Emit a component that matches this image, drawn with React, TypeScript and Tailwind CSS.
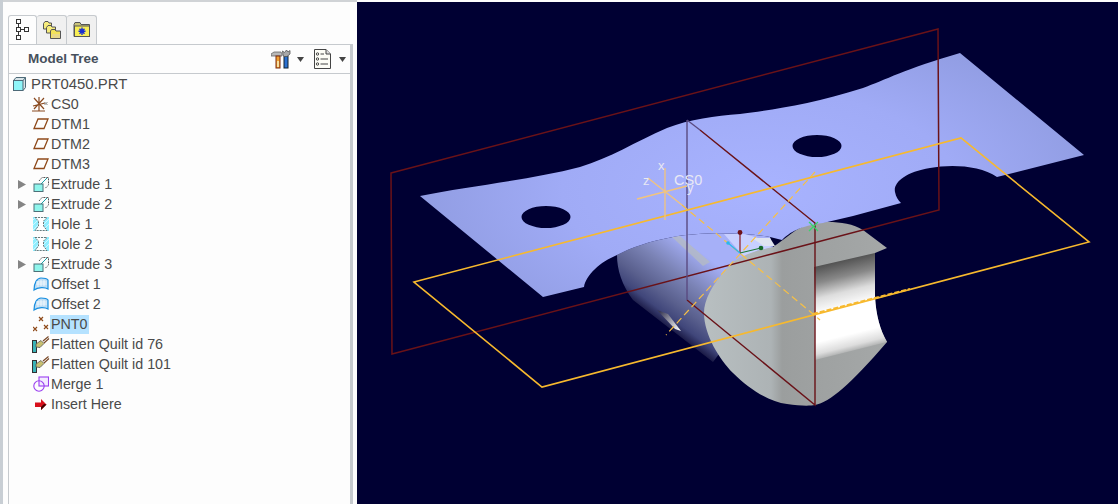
const TreeTabIcon = () => (
  <svg width="20" height="24" viewBox="0 0 20 24" fill="none" stroke="#333" strokeWidth="1">
    <rect x="3.5" y="1.5" width="4" height="4" />
    <rect x="3.5" y="9.5" width="4" height="4" />
    <rect x="3.5" y="17.5" width="4" height="4" />
    <rect x="11.5" y="9.5" width="4" height="4" />
    <path d="M5.5 5.5V9.5M5.5 13.5V17.5M7.5 11.5H11.5" />
  </svg>
);

const FoldersIcon = () => (
  <svg width="20" height="20" viewBox="0 0 20 20" stroke="#555" strokeWidth="1">
    <path d="M1.5 3.5L3 1.5H6L7 3H9.5V9H1.5Z" fill="#f6ec7c" />
    <path d="M4.5 7.5L6 5.5H9L10 7H13.5V13H4.5Z" fill="#f6ec7c" />
    <path d="M8.5 11L9.5 9.5H13L14 11H18.5V18.5H8.5Z" fill="#f3e35a" />
    <path d="M10 14H18V18H10Z" fill="#e9d98a" stroke="none" />
  </svg>
);

const FolderStarIcon = () => (
  <svg width="18" height="16" viewBox="0 0 18 16" stroke="#555" strokeWidth="1">
    <path d="M1 2.5L2 .5H7L8 2.5H16.5V14.5H1Z" fill="#c9c27a" />
    <rect x="1.5" y="4" width="15" height="10.5" fill="#f8ee55" />
    <path d="M9 5.5V13M5.5 9.2H12.5M6.5 6.7L11.5 11.7M11.5 6.7L6.5 11.7" stroke="#1a2fd0" strokeWidth="1.4" />
    <circle cx="9" cy="9.2" r="1.4" fill="#1a2fd0" stroke="none" />
  </svg>
);

const ToolsIcon = () => (
  <svg width="20" height="20" viewBox="0 0 20 20">
    <path d="M0 5L3 3H10L11 5V7H2L0 7Z" fill="#b8b8b8" stroke="#666" strokeWidth=".8" />
    <rect x="5" y="7" width="4" height="12" fill="#f0a030" stroke="#7a2a10" strokeWidth="1" />
    <rect x="6" y="12" width="2" height="6" fill="#f8e0a0" />
    <rect x="13" y="7" width="4" height="12" fill="#2a70d0" stroke="#123" strokeWidth="1" />
    <path d="M12 6L11.5 2L13.5 3.5L15.5 1L17 3L19 1.5L19 5L16 7.5H13Z" fill="#a8a8a8" stroke="#555" strokeWidth=".8" />
  </svg>
);

const ListIcon = () => (
  <svg width="17" height="20" viewBox="0 0 17 20" fill="#fdfdf6" stroke="#444" strokeWidth="1">
    <path d="M.5 .5H12L16.5 5V19.5H.5Z" />
    <path d="M12 .5V5H16.5" fill="#ddd" />
    <circle cx="3.5" cy="5" r="1.2" />
    <circle cx="3.5" cy="10" r="1.2" />
    <circle cx="3.5" cy="15" r="1.2" />
    <path d="M6.5 5H10M6.5 10H14M6.5 15H14" />
  </svg>
);

const Caret = () => (
  <svg width="7" height="5" viewBox="0 0 7 5"><path d="M0 0H7L3.500 5Z" fill="#444" /></svg>
);

const PartIcon = () => (
  <svg width="13" height="14" viewBox="0 0 13 14" stroke="#4d6a78" strokeWidth="1">
    <path d="M.5 3.5L3 .5H12.5V10.5L10 13.500H.5Z" fill="#d8e4e8" />
    <rect x=".5" y="3.5" width="9.5" height="10" fill="#8ff5f8" />
    <path d="M10 3.5L12.5 .5" />
  </svg>
);

const CsysIcon = () => (
  <svg width="17" height="16" viewBox="0 0 17 16" stroke="#8a4a20" strokeWidth="1.2" fill="none">
    <path d="M7 1V15M1 10L13 7M2 2L12 13M0 15H13M12 2L2 13" />
    <path d="M12.500 6L15.500 9M15.500 6L12.500 9" stroke="#888" strokeWidth="1" />
  </svg>
);

const DatumIcon = () => (
  <svg width="16" height="12" viewBox="0 0 16 12" fill="none">
    <path d="M5 1H15L11 10.500H1Z" stroke="#8f4a1a" strokeWidth="1.3" />
  </svg>
);

const ExtrudeIcon = () => (
  <svg width="16" height="16" viewBox="0 0 16 16" fill="none">
    <path d="M6 5L9 1.5H15.5V9L12 12.5" stroke="#555" strokeWidth="1" strokeDasharray="2 1" />
    <path d="M7 9L14 2" stroke="#18a0a8" strokeWidth="1" />
    <rect x="1" y="8" width="9" height="7.5" fill="#8ff5ec" stroke="#4d7078" strokeWidth="1" />
  </svg>
);

const HoleIcon = () => (
  <svg width="16" height="14" viewBox="0 0 16 14">
    <rect width="16" height="14" fill="#8feeff" />
    <path d="M0 3L3 0M0 8L8 0M0 13L13 0M4 14L16 2M9 14L16 7" stroke="#d0f7ff" strokeWidth="1" />
    <path d="M2 .5H14L10.500 4V9L14 13.500H2L5.500 9V4Z" fill="#fff" stroke="#555" strokeWidth=".8" strokeDasharray="2 1" />
  </svg>
);

const OffsetIcon = () => (
  <svg width="16" height="15" viewBox="0 0 16 15">
    <path d="M1 13C1 6 4 1 8 1C11 1 14 1.5 15 3V12C12 10 5 10 1 13Z" fill="#bcdcf4" stroke="#1a8fe0" strokeWidth="1.2" />
    <path d="M5 4V10M8 3V9M11 3V9M3 7H14M3 5H14" stroke="#fff" strokeWidth=".7" />
  </svg>
);

const PointIcon = () => (
  <svg width="16" height="16" viewBox="0 0 16 16" stroke="#8f4a1a" strokeWidth="1.2">
    <path d="M6 1L10 5M10 1L6 5M0 11L4 15M4 11L0 15M11 9L15 13M15 9L11 13" />
  </svg>
);

const FlattenIcon = () => (
  <svg width="18" height="17" viewBox="0 0 18 17">
    <rect x=".5" y="4.5" width="4" height="12" fill="#3ab4b8" stroke="#333" strokeWidth="1" />
    <path d="M4 8L9 4.5L12 7.5L8 11.5L4 11Z" fill="#c8c070" stroke="#555" strokeWidth=".8" />
    <path d="M11 5L16.5 .5M12 7L17 2.5" stroke="#7a4a2a" strokeWidth="1.2" />
  </svg>
);

const MergeIcon = () => (
  <svg width="16" height="16" viewBox="0 0 16 16" fill="none" stroke="#9a3ff0" strokeWidth="1.1">
    <rect x="6" y="1" width="9.5" height="9" fill="#f4ecff" />
    <circle cx="6" cy="10" r="5.2" />
  </svg>
);

const InsertIcon = () => (
  <svg width="12" height="11" viewBox="0 0 12 11">
    <path d="M0 3.5H6V0L11.5 5.5L6 11V8H0Z" fill="#d8101c" />
    <path d="M6 11L11.5 5.5L9 5L6 8Z" fill="#400" />
  </svg>
);

type Row = { label: string; icon: React.ReactNode; arrow?: boolean; selected?: boolean };

const rows: Row[] = [
  { label: 'CS0', icon: <CsysIcon /> },
  { label: 'DTM1', icon: <DatumIcon /> },
  { label: 'DTM2', icon: <DatumIcon /> },
  { label: 'DTM3', icon: <DatumIcon /> },
  { label: 'Extrude 1', icon: <ExtrudeIcon />, arrow: true },
  { label: 'Extrude 2', icon: <ExtrudeIcon />, arrow: true },
  { label: 'Hole 1', icon: <HoleIcon /> },
  { label: 'Hole 2', icon: <HoleIcon /> },
  { label: 'Extrude 3', icon: <ExtrudeIcon />, arrow: true },
  { label: 'Offset 1', icon: <OffsetIcon /> },
  { label: 'Offset 2', icon: <OffsetIcon /> },
  { label: 'PNT0', icon: <PointIcon />, selected: true },
  { label: 'Flatten Quilt id 76', icon: <FlattenIcon /> },
  { label: 'Flatten Quilt id 101', icon: <FlattenIcon /> },
  { label: 'Merge 1', icon: <MergeIcon /> },
  { label: 'Insert Here', icon: <InsertIcon /> },
];

const TreeRow = ({ row }: { row: Row }) => (
  <div className="flex h-5 items-center">
    <div className="flex w-[22px] justify-end pr-[5px]">
      {row.arrow && (
        <svg width="8" height="9" viewBox="0 0 8 9"><path d="M0 0L8 4.5L0 9Z" fill="#858585" /></svg>
      )}
    </div>
    <div className="flex w-[19px] items-center justify-center">{row.icon}</div>
    <span className={row.selected ? 'bg-[#b5e2ff] px-px leading-[19px]' : 'px-px leading-[19px]'}>{row.label}</span>
  </div>
);

const Scene = () => (
  <svg className="block h-full w-full" viewBox="357 2 761 502" fill="none">
    <defs>
      <radialGradient id="plate" gradientUnits="userSpaceOnUse" cx="760" cy="190" r="360" gradientTransform="matrix(1 0 0 .5 0 95)">
        <stop offset="0" stopColor="#a8b3ff" />
        <stop offset="0.55" stopColor="#a0abf6" />
        <stop offset="1" stopColor="#8f9be0" />
      </radialGradient>
      <linearGradient id="body" gradientUnits="userSpaceOnUse" x1="634" y1="302" x2="682" y2="238">
        <stop offset="0" stopColor="#1c1c48" />
        <stop offset="0.12" stopColor="#40467a" />
        <stop offset="0.3" stopColor="#5a608e" />
        <stop offset="0.6" stopColor="#7a82b4" />
        <stop offset="1" stopColor="#a6b0f8" />
      </linearGradient>
      <linearGradient id="disc" gradientUnits="userSpaceOnUse" x1="704" y1="0" x2="890" y2="0">
        <stop offset="0" stopColor="#b8bfc1" />
        <stop offset="0.36" stopColor="#adb3b5" />
        <stop offset="0.42" stopColor="#9b9e9e" />
        <stop offset="1" stopColor="#a5a8a8" />
      </linearGradient>
      <linearGradient id="notch" gradientUnits="userSpaceOnUse" x1="830" y1="262" x2="853" y2="355">
        <stop offset="0" stopColor="#4e4e4e" />
        <stop offset="0.18" stopColor="#888888" />
        <stop offset="0.34" stopColor="#dddddd" />
        <stop offset="0.5" stopColor="#ffffff" />
        <stop offset="0.78" stopColor="#ffffff" />
        <stop offset="0.9" stopColor="#dddddd" />
        <stop offset="1" stopColor="#909393" />
      </linearGradient>
      <linearGradient id="glint" gradientUnits="userSpaceOnUse" x1="660" y1="312" x2="680" y2="330">
        <stop offset="0" stopColor="#3a3a55" />
        <stop offset="1" stopColor="#ffffff" />
      </linearGradient>
    </defs>

    {/* cylinder behind the plate */}
    <path d="M617 255C617 270 622 285 633 300L713 362L760 300L773 247L770 237C740 232 700 232 673 237C650 241 630 248 617 255Z" fill="url(#body)" />
    <path d="M657 310L668 314L681 331L675 329Z" fill="url(#glint)" />
    <path d="M672 237L680 236L710 262L703 266Z" fill="#b4bac4" opacity="0.8" />
    <path d="M724 234L745 234L765 240L772 248L758 250L745 258Z" fill="#c8d0ff" />
    <path d="M752 238L770 238L775 246L764 246Z" fill="#dfe4f0" />

    {/* end face and cut */}
    <path
      d="M773 247C750 252 735 258 727 268C712 285 704 300 704 313C704 335 720 360 733 373C750 390 770 402 787 404C800 406 810 406 815 405C830 402 850 385 887 342C880 330 876 315 875 297L875 253L887 248L863 230C850 222 830 221 813 223C795 227 785 240 773 247Z"
      fill="url(#disc)"
    />
    <path d="M814 267L875 253V297C876 315 880 330 887 342L815 360Z" fill="url(#notch)" />

    {/* plate */}
    <path
      fillRule="evenodd"
      d="M420 196C470 186 530 180 580 167C610 158 635 142 667 128C690 119 715 116 740 114C770 110 810 105 863 88C885 80 905 69 960 53L1084 155L997 177C980 165 950 164 930 168C905 172 893 183 895 192C896 197 898 200 901 203L853 216L823 223C800 226 790 232 782 240L770 237C740 232 700 232 673 237C650 241 630 248 617 255C600 262 586 275 584 287L543 297Z
      M521.5 217a24.5 11 0 1 0 49 0a24.5 11 0 1 0 -49 0Z
      M792.5 146a24.5 11 0 1 0 49 0a24.5 11 0 1 0 -49 0Z"
      fill="url(#plate)"
    />

    {/* datum planes */}
    <path d="M391 173L938 29L939 210L392 354Z" stroke="#6a1218" strokeWidth="1.5" />
    <path d="M687 300L815 405V223L700 130" stroke="#6a1218" strokeWidth="1.4" />
    <path d="M687 120V300" stroke="#5a4a80" strokeWidth="1.4" />
    <path d="M687 120L700 130" stroke="#5a4a80" strokeWidth="1.3" />
    <path d="M414 282L961 138L1089 242L542 387Z" stroke="#f7b92e" strokeWidth="1.6" />

    {/* dashed datum axes */}
    <path d="M682 205L813 314L820 320" stroke="#f7c045" strokeWidth="1.2" strokeDasharray="7 4" />
    <path d="M815 172L666 335" stroke="#f7c045" strokeWidth="1.2" strokeDasharray="7 4" />
    <path d="M813 314L910 289" stroke="#f7b92e" strokeWidth="2" strokeDasharray="5 2" />

    {/* coordinate system */}
    <path d="M665 168V220M637 199L687 186M648 178L682 205" stroke="#f2c47c" strokeWidth="1.3" />
    <g fill="#e8e8f4" fontFamily='"Liberation Sans", Arial, sans-serif'>
      <text x="658" y="170" fontSize="13">x</text>
      <text x="643" y="185" fontSize="13">z</text>
      <text x="674" y="185" fontSize="14.5">CS0</text>
      <text x="687" y="192" fontSize="13">y</text>
    </g>

    {/* point triad */}
    <path d="M740 253V233" stroke="#8a1a20" strokeWidth="1.2" />
    <circle cx="740" cy="232.500" r="2.400" fill="#6e1218" />
    <path d="M740 253L728 243" stroke="#27b8ee" strokeWidth="1.2" />
    <circle cx="728" cy="243" r="1.800" fill="#27b8ee" />
    <path d="M740 253L761 248" stroke="#1c7a34" strokeWidth="1.2" />
    <circle cx="761" cy="248" r="2.300" fill="#146a2a" />
    <path d="M809 222L818 231M818 222L809 231" stroke="#38d46a" strokeWidth="1.2" />
  </svg>
);

export default function App() {
  return (
    <div
      className="flex h-[504px] w-[1118px] overflow-hidden bg-[#fdfdfd] text-[14.3px] text-[#4a4a4a]"
      style={{ fontFamily: '"Liberation Sans", Arial, sans-serif' }}
    >
      <div className="w-[3px] shrink-0 bg-[#c8ced4]" />

      <aside className="flex w-[354px] shrink-0 flex-col">
        <div className="h-[2px] shrink-0 border-b-2 border-[#d0d3d6]" />
        <div className="ml-[5px] mt-[13px] flex h-[29px] shrink-0">
          <div className="flex w-[29px] items-center justify-center rounded-t-[3px] border-x border-t border-[#c6cace] bg-[#fdfdfd]">
            <TreeTabIcon />
          </div>
          <div className="flex w-[30px] items-center justify-center rounded-t-[3px] border-r border-t border-[#c6cace] bg-[#f0f0f0]">
            <FoldersIcon />
          </div>
          <div className="flex w-[30px] items-center justify-center rounded-t-[3px] border-r border-t border-[#c6cace] bg-[#f0f0f0]">
            <FolderStarIcon />
          </div>
        </div>

        <div className="ml-[5px] mr-[4px] flex min-h-0 flex-1 flex-col border-l border-r-[3px] border-t border-[#c6cace]">
          <div className="flex h-[29px] shrink-0 items-center border-b border-[#c6cace] pl-[19px]">
            <span className="text-[13.5px] font-bold text-[#46505c]">Model Tree</span>
            <div className="ml-auto flex items-center">
              <ToolsIcon />
              <div className="ml-[6px]"><Caret /></div>
              <div className="ml-[10px]"><ListIcon /></div>
              <div className="ml-[8px] mr-[4px]"><Caret /></div>
            </div>
          </div>

          <div className="flex h-5 items-center pl-[4px]">
            <PartIcon />
            <span className="ml-[5px] text-[14.9px]">PRT0450.PRT</span>
          </div>
          {rows.map((row) => (
            <TreeRow key={row.label} row={row} />
          ))}
        </div>
      </aside>

      <main className="mt-[2px] min-w-0 flex-1 bg-[#000033]">
        <Scene />
      </main>
    </div>
  );
}
